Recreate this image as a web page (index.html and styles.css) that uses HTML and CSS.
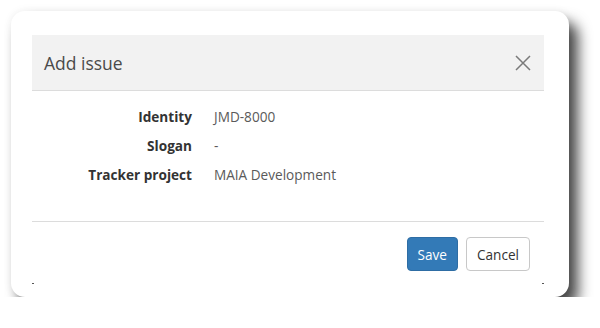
FILE: index.html
```html
<!DOCTYPE html>
<html>
<head>
<meta charset="utf-8">
<link rel="stylesheet" href="styles.css">
</head>
<body>
<div class="dialog">
  <div class="header">
    <span class="title">Add issue</span>
    <svg class="close" width="18" height="18" viewBox="0 0 18 18"><path d="M2 2 L16 16 M16 2 L2 16" stroke="#7a7a7a" stroke-width="1.5" fill="none"/></svg>
  </div>
  <div class="body">
    <div class="label">Identity</div><div class="value">JMD-8000</div>
    <div class="label">Slogan</div><div class="value">-</div>
    <div class="label">Tracker project</div><div class="value">MAIA Development</div>
  </div>
  <div class="footer">
    <button class="btn primary">Save</button>
    <button class="btn">Cancel</button>
  </div>
  <div class="marks"><span class="mark"></span><span class="mark"></span></div>
</div>
</body>
</html>
```
FILE: styles.css
```css
html, body { margin: 0; padding: 0; background: #fff; }
body { font-family: "Open Sans", "Noto Sans", sans-serif; font-size: 13.6px; color: #333; }
.dialog {
  margin: 11px 0 0 11px;
  width: 558px;
  height: 286px;
  box-sizing: border-box;
  padding: 24px 25px 0 21px;
  background: #fff;
  border-radius: 14px;
  box-shadow: 9px 11px 14px rgba(0,0,0,0.72), 0 0 10px rgba(0,0,0,0.06);
  display: flex;
  flex-direction: column;
}
.header {
  height: 55px;
  background: #f2f2f2;
  border-bottom: 1px solid #dcdcdc;
  display: flex;
  align-items: center;
  justify-content: space-between;
  padding: 0 12px 0 12px;
}
.title { font-size: 17.5px; color: #4a4a4a; }
.close { display: block; }
.body {
  display: grid;
  grid-template-columns: 160px 1fr;
  column-gap: 22px;
  grid-auto-rows: 29px;
  align-items: center;
  padding: 11px 0 32px;
  border-bottom: 1px solid #dcdcdc;
}
.label { text-align: right; font-weight: 700; color: #333; }
.value { color: #5a5a5a; }
.footer {
  display: flex;
  justify-content: flex-end;
  gap: 8px;
  padding: 15px 14px 0 0;
}
.btn {
  font-family: inherit;
  font-size: 13.6px;
  height: 34px;
  padding: 0 10px;
  border-radius: 4px;
  border: 1px solid #c8c8c8;
  background: #fff;
  color: #333;
}
.btn.primary { background: #337ab7; border-color: #2e6da4; color: #fff; }
.marks { display: flex; justify-content: space-between; margin-top: 12px; }
.mark { width: 2px; height: 1px; background: #555; }
```
